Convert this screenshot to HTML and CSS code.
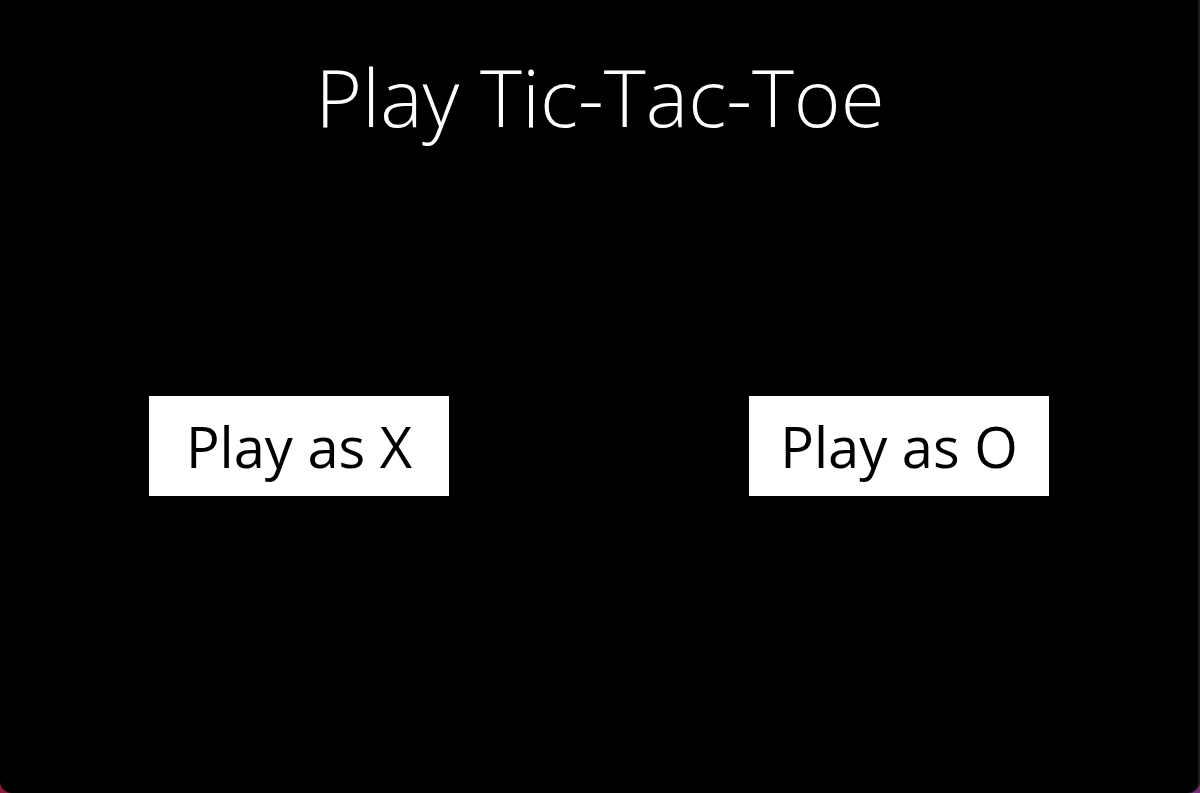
FILE: index.html
```html
<!DOCTYPE html>
<html>
<head>
<meta charset="utf-8">
<link rel="stylesheet" href="styles.css">
</head>
<body>
<div class="window">
  <h1 class="title">Play Tic-Tac-Toe</h1>
  <div class="choices">
    <div class="cell"><button class="choice">Play as X</button></div>
    <div class="cell"><button class="choice">Play as O</button></div>
  </div>
</div>
</body>
</html>
```
FILE: styles.css
```css
html, body {
  margin: 0;
  padding: 0;
  width: 1200px;
  height: 793px;
  overflow: hidden;
}
body {
  background: linear-gradient(to right, #8e1b3d, #7d2c82);
  font-family: "Open Sans", "Noto Sans", sans-serif;
}
.window {
  box-sizing: border-box;
  width: 1200px;
  height: 793px;
  background: #000;
  box-shadow: inset -2px 0 0 #1c1c1c;
  border-radius: 0 0 12px 12px;
  display: flex;
  flex-direction: column;
}
.title {
  margin: 0;
  padding-top: 56px;
  font-size: 80px;
  line-height: 80px;
  font-weight: 300;
  color: #fff;
  text-align: center;
}
.choices {
  margin-top: 260px;
  display: grid;
  grid-template-columns: 1fr 1fr;
}
.cell {
  display: flex;
  justify-content: center;
}
.choice {
  width: 300px;
  height: 100px;
  margin-right: 2px;
  border: none;
  border-radius: 0;
  background: #fff;
  color: #000;
  font-family: "Open Sans", "Noto Sans", sans-serif;
  font-size: 56px;
  font-weight: 400;
  padding: 0;
  display: flex;
  align-items: center;
  justify-content: center;
}
```
